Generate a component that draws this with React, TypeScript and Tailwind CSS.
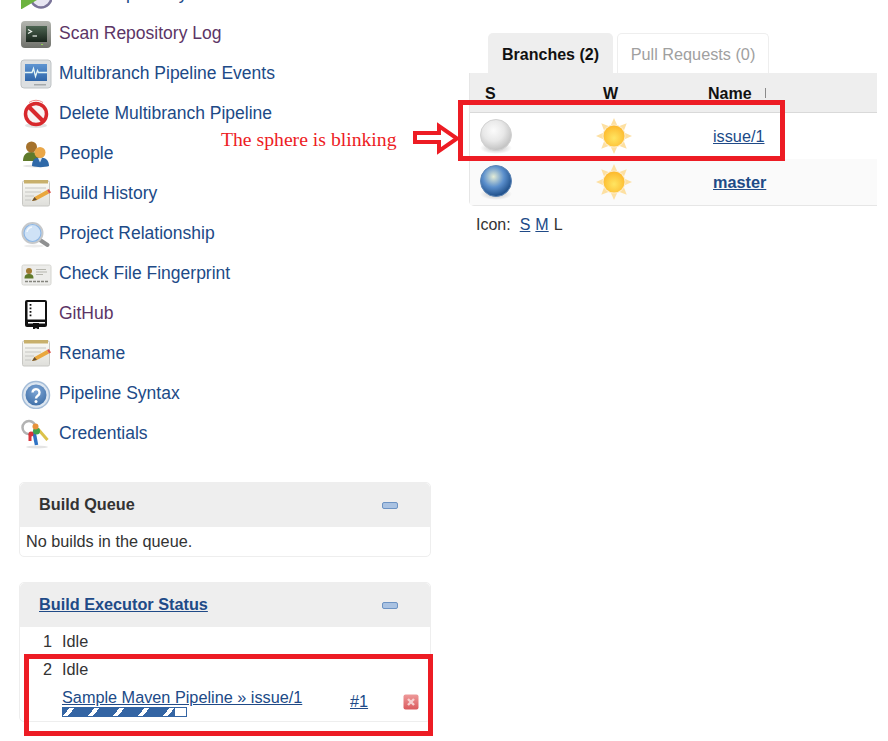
import type { ReactNode } from "react";

const sidebarItems: { label: string; icon: ReactNode; visited?: boolean }[] = [
  { label: "Scan Repository Now", icon: <ScanIcon /> },
  { label: "Scan Repository Log", icon: <TerminalIcon />, visited: true },
  { label: "Multibranch Pipeline Events", icon: <MonitorIcon /> },
  { label: "Delete Multibranch Pipeline", icon: <NoEntryIcon /> },
  { label: "People", icon: <PeopleIcon /> },
  { label: "Build History", icon: <NotepadIcon id="a" /> },
  { label: "Project Relationship", icon: <SearchIcon /> },
  { label: "Check File Fingerprint", icon: <CardIcon /> },
  { label: "GitHub", icon: <BookIcon />, visited: true },
  { label: "Rename", icon: <NotepadIcon id="b" /> },
  { label: "Pipeline Syntax", icon: <HelpIcon /> },
  { label: "Credentials", icon: <KeysIcon /> },
];

function ScanIcon() {
  return (
    <svg width="32" height="32" viewBox="0 0 32 32">
      <circle cx="21" cy="20" r="10.500" fill="#e8e6f2" stroke="#7a7499" strokeWidth="2.500" />
      <path d="M1 32.500L1 20L22 20Z" fill="#6cb33f" />
    </svg>
  );
}

function TerminalIcon() {
  return (
    <svg width="32" height="32" viewBox="0 0 32 32">
      <linearGradient id="term-bezel" x1="0" y1="0" x2="0" y2="1">
        <stop offset="0" stopColor="#b4b6b0" />
        <stop offset="1" stopColor="#6f716b" />
      </linearGradient>
      <linearGradient id="term-screen" x1="0" y1="0" x2="0" y2="1">
        <stop offset="0" stopColor="#4d6552" />
        <stop offset="1" stopColor="#18241b" />
      </linearGradient>
      <rect x="1" y="4" width="30" height="27" rx="4" fill="url(#term-bezel)" />
      <rect x="6" y="9" width="21" height="16" fill="url(#term-screen)" />
      <path d="M8 12.500l3.500 2-3.500 2" fill="none" stroke="#eef4ee" strokeWidth="1.200" />
      <path d="M12.500 19h4.500" stroke="#eef4ee" strokeWidth="1.200" />
      <rect x="21" y="27" width="2" height="1" fill="#8fd14f" />
    </svg>
  );
}

function MonitorIcon() {
  return (
    <svg width="32" height="32" viewBox="0 0 32 32">
      <linearGradient id="mon-screen" x1="0" y1="0" x2="0" y2="1">
        <stop offset="0" stopColor="#5f95d2" />
        <stop offset="1" stopColor="#2f66a9" />
      </linearGradient>
      <rect x="1" y="3" width="30" height="28" rx="3" fill="#dcdfe1" stroke="#bfc3c5" />
      <rect x="5" y="7" width="22" height="17" fill="url(#mon-screen)" />
      <path d="M5 15.500h7l1.500-4 2 8 2-6 1 2h8.500" fill="none" stroke="#e4f5f5" strokeWidth="1.300" />
      <rect x="14" y="27" width="12" height="1.500" fill="#a5a9ab" />
    </svg>
  );
}

function NoEntryIcon() {
  return (
    <svg width="32" height="32" viewBox="0 0 32 32">
      <ellipse cx="16" cy="28.500" rx="11" ry="2.500" fill="#e2e2e2" />
      <circle cx="16" cy="17" r="10.500" fill="#f8f3f3" stroke="#d8282c" strokeWidth="3.500" />
      <path d="M9.500 10.500l13 13" stroke="#d8282c" strokeWidth="4" />
      <path d="M9 5.500a12 12 0 0 1 14 0" fill="none" stroke="#ef8a8a" strokeWidth="1" />
    </svg>
  );
}

function PeopleIcon() {
  return (
    <svg width="32" height="32" viewBox="0 0 32 32">
      <ellipse cx="16" cy="29" rx="13" ry="1.500" fill="#e4e4e4" />
      <path d="M3 24c0-6 3-9 8.500-9s8.500 3 8.500 9z" fill="#5f7a2b" />
      <circle cx="11.500" cy="10" r="5.500" fill="#a5722c" />
      <path d="M12 29c0-6 2.500-8.500 8-8.500s9 2.500 9 8.500c-5 1.500-12 1.500-17 0z" fill="#2f69a8" />
      <circle cx="20" cy="15.500" r="5.500" fill="#eaa748" />
      <path d="M18 21l2 4.500 2-4.500z" fill="#dce8f3" />
    </svg>
  );
}

function NotepadIcon({ id }: { id: string }) {
  return (
    <svg width="32" height="32" viewBox="0 0 32 32">
      <linearGradient id={`pad-${id}`} x1="0" y1="0" x2="0" y2="1">
        <stop offset="0" stopColor="#fbfbf6" />
        <stop offset="1" stopColor="#dededa" />
      </linearGradient>
      <rect x="2.500" y="4" width="27" height="25" rx="1.500" fill={`url(#pad-${id})`} stroke="#c8c8c4" />
      <rect x="4" y="3" width="24" height="3.500" fill="#c8b06c" />
      <path d="M5 11h21M5 15h16M5 19h9M5 23h6" stroke="#c6c6c2" />
      <path d="M12 24l2.500-4L27 13l2 3.500-12 6.500z" fill="#e9a73d" />
      <path d="M27 13l2 3.500 2-1-2-3.500z" fill="#d8534a" />
      <path d="M12 24l2.500-4 2.500 3z" fill="#6a5233" />
    </svg>
  );
}

function SearchIcon() {
  return (
    <svg width="32" height="32" viewBox="0 0 32 32">
      <ellipse cx="14" cy="29" rx="10" ry="1.500" fill="#ececec" />
      <path d="M20 23l7.500 5" stroke="#8f9091" strokeWidth="4" strokeLinecap="round" />
      <circle cx="12.500" cy="16" r="10" fill="#cfe2f6" stroke="#c6c8ca" strokeWidth="2" />
      <circle cx="12.500" cy="16" r="8.500" fill="none" stroke="#8db6e4" strokeWidth="1.200" />
      <path d="M7 15a6 6 0 0 1 5-5" fill="none" stroke="#f2f8fd" strokeWidth="1.500" />
    </svg>
  );
}

function CardIcon() {
  return (
    <svg width="32" height="32" viewBox="0 0 32 32">
      <rect x="2" y="8" width="29" height="20" rx="1.500" fill="#ececea" stroke="#d5d5d0" />
      <circle cx="9" cy="14" r="3" fill="#a07a32" />
      <path d="M4.500 21.500c0-3.500 1.500-4.500 4.500-4.500s4.500 1 4.500 4.500z" fill="#5f7a2b" />
      <path d="M16 12.500h10M16 15h11M16 17.500h7" stroke="#b5b5ad" />
      <path d="M5 24.500h23" stroke="#85857e" strokeWidth="1.500" strokeDasharray="3 1" />
    </svg>
  );
}

function BookIcon() {
  return (
    <svg width="32" height="32" viewBox="0 0 32 32">
      <rect x="5" y="3" width="22" height="27" rx="2" fill="#111111" />
      <rect x="7.500" y="5" width="17.500" height="17.500" fill="#ffffff" />
      <rect x="8" y="25" width="17" height="1.500" fill="#ffffff" />
      <path d="M13 26h6v7l-3-2-3 2z" fill="#111111" />
      <path d="M10.500 7v14" stroke="#111111" strokeWidth="1.800" strokeDasharray="1.800 1.700" />
    </svg>
  );
}

function HelpIcon() {
  return (
    <svg width="32" height="32" viewBox="0 0 32 32">
      <radialGradient id="help" cx="0.5" cy="0.3" r="0.75">
        <stop offset="0" stopColor="#7ea6d6" />
        <stop offset="1" stopColor="#3e6ea6" />
      </radialGradient>
      <circle cx="16" cy="18" r="13.500" fill="#dde6f0" stroke="#a5bdd8" strokeWidth="1.500" />
      <circle cx="16" cy="18" r="10.500" fill="url(#help)" />
      <path d="M12.500 15.500a3.500 3.500 0 1 1 5.500 3c-1.400 1-2 1.500-2 3" fill="none" stroke="#ffffff" strokeWidth="2.400" />
      <circle cx="16" cy="24.500" r="1.500" fill="#ffffff" />
    </svg>
  );
}

function KeysIcon() {
  return (
    <svg width="32" height="32" viewBox="0 0 32 32">
      <ellipse cx="17" cy="30" rx="11" ry="1.500" fill="#e4e4e4" />
      <circle cx="9" cy="10.500" r="6.500" fill="none" stroke="#b3b3b3" strokeWidth="2.500" />
      <path d="M18 12l9.500 11" stroke="#dcc24a" strokeWidth="3" />
      <path d="M14 15l2.500 13" stroke="#2f73c4" strokeWidth="3.500" />
      <path d="M10 17v7" stroke="#d8343a" strokeWidth="3" />
      <circle cx="16.500" cy="14" r="3.500" fill="#3fa34d" />
      <circle cx="15.500" cy="9.500" r="3" fill="#e8923a" />
      <circle cx="11" cy="17" r="2.500" fill="#d8343a" />
    </svg>
  );
}

function Sphere({ id, light, mid, dark, edge }: { id: string; light: string; mid: string; dark: string; edge: string }) {
  return (
    <svg width="36" height="40" viewBox="0 0 36 40">
      <radialGradient id={`ball-${id}`} cx="0.42" cy="0.36" r="0.62">
        <stop offset="0" stopColor={light} />
        <stop offset="0.55" stopColor={mid} />
        <stop offset="1" stopColor={dark} />
      </radialGradient>
      <radialGradient id={`shade-${id}`} cx="0.5" cy="0.5" r="0.5">
        <stop offset="0" stopColor="#bdbdbd" />
        <stop offset="1" stopColor="#bdbdbd" stopOpacity="0" />
      </radialGradient>
      <ellipse cx="18" cy="32" rx="16" ry="6" fill={`url(#shade-${id})`} />
      <circle cx="18" cy="19" r="15.500" fill={`url(#ball-${id})`} stroke={edge} />
    </svg>
  );
}

function Sun({ id }: { id: string }) {
  const rays = [0, 45, 90, 135, 180, 225, 270, 315];
  return (
    <svg width="38" height="38" viewBox="0 0 38 38">
      <radialGradient id={`sun-${id}`} cx="0.5" cy="0.6" r="0.6">
        <stop offset="0" stopColor="#ffe561" />
        <stop offset="1" stopColor="#fdb82c" />
      </radialGradient>
      {rays.map((r) => (
        <path key={r} d="M15 10L19 1l4 9z" fill="#fde0a2" transform={`rotate(${r} 19 19)`} />
      ))}
      <circle cx="19" cy="19" r="11.500" fill="#fdeccb" />
      <circle cx="19" cy="19" r="10.500" fill={`url(#sun-${id})`} />
    </svg>
  );
}

function StopIcon() {
  return (
    <svg width="16" height="16" viewBox="0 0 16 16">
      <linearGradient id="stop-bg" x1="0" y1="0" x2="0" y2="1">
        <stop offset="0" stopColor="#ee9a9a" />
        <stop offset="1" stopColor="#da5a5d" />
      </linearGradient>
      <rect x="0.500" y="0.500" width="15" height="15" rx="2" fill="url(#stop-bg)" />
      <path d="M5 5l6 6M11 5l-6 6" stroke="#f6d2d2" strokeWidth="2.400" />
    </svg>
  );
}

function MinusButton() {
  return <span className="h-[7px] w-[16px] rounded-[2px] border border-[#6d93c3] bg-[#a9c2e2]" />;
}

function Panel({ title, children }: { title: ReactNode; children: ReactNode }) {
  return (
    <section className="rounded-[5px] border border-[#eeeeee] bg-white">
      <div className="flex h-[44px] items-center justify-between rounded-t-[5px] bg-[#eeeeee] pl-[19px] pr-[32px]">
        <h2 className="pb-[2px] font-bold text-[#333333]">{title}</h2>
        <MinusButton />
      </div>
      {children}
    </section>
  );
}

export default function App() {
  return (
    <div className="relative h-[741px] w-[888px] overflow-hidden bg-white font-['Liberation_Sans',Arial,sans-serif] text-[16.25px] text-[#333333]">
      <div className="flex items-start">
        {/* Left column */}
        <div className="ml-[19px] w-[412px] shrink-0">
          <nav className="-mt-[27px]">
            {sidebarItems.map((item) => (
              <div key={item.label} className="flex h-[40px] items-center">
                <span className="ml-[1px] flex h-[32px] w-[32px] shrink-0 items-center justify-center blur-[0.3px]">
                  {item.icon}
                </span>
                <a
                  className={`ml-[7px] mt-[2px] text-[17.5px] leading-none ${
                    item.visited ? "text-[#5c3566]" : "text-[#204a87]"
                  }`}
                >
                  {item.label}
                </a>
              </div>
            ))}
          </nav>

          <div className="mt-[29px]">
            <Panel title="Build Queue">
              <p className="h-[29px] pl-[6px] pt-[5px] leading-[18px]">No builds in the queue.</p>
            </Panel>
          </div>

          <div className="mt-[25px]">
            <Panel title={<a className="text-[#204a87] underline">Build Executor Status</a>}>
              <div className="flex h-[28px] items-center">
                <span className="w-[32px] text-right">1</span>
                <span className="ml-[10px]">Idle</span>
              </div>
              <div className="flex h-[28px] items-center">
                <span className="w-[32px] text-right">2</span>
                <span className="ml-[10px]">Idle</span>
              </div>
              <div className="flex h-[38px] items-start pl-[42px] pt-[4px]">
                <div className="w-[240px]">
                  <a className="block leading-[20px] whitespace-nowrap text-[#204a87] underline">
                    Sample Maven Pipeline » issue/1
                  </a>
                  <div className="h-[10px] w-[125px] border border-[#3465a4]">
                    <div className="h-full w-[112px] bg-[repeating-linear-gradient(-52deg,#3465a4_0,#3465a4_5.5px,#ffffff_5.5px,#ffffff_9.4px,#3465a4_9.4px,#3465a4_19.7px)]" />
                  </div>
                </div>
                <a className="ml-[48px] mt-[2px] text-[#204a87] underline">#1</a>
                <span className="ml-[35px] mt-[7px] blur-[0.4px]">
                  <StopIcon />
                </span>
              </div>
            </Panel>
          </div>
        </div>

        {/* Right column */}
        <div className="ml-[38px] mt-[33px] w-[408px] shrink-0">
          <div className="ml-[19px] flex h-[40px] items-stretch gap-[4px]">
            <div className="flex w-[125px] items-center justify-center rounded-t-[5px] bg-[#eeeeee] pt-[3px] text-[16px] font-bold text-[#111111]">
              Branches (2)
            </div>
            <div className="flex w-[152px] items-center justify-center rounded-t-[5px] border border-b-0 border-[#eeeeee] pt-[2px] text-[#a0a0a0]">
              Pull Requests (0)
            </div>
          </div>

          <div className="rounded-bl-[5px] border-b border-l border-[#e6e6e6]">
            <div className="flex h-[40px] items-end border-b border-[#d9d9d9] bg-[#eeeeee] pb-[10px] text-[16px] font-bold leading-none text-[#111111]">
              <span className="ml-[15px] w-[118px]">S</span>
              <span className="w-[105px]">W</span>
              <span>Name</span>
              <span className="mb-[4px] ml-[13px] h-[10px] w-[1px] bg-[#8a8a8a]" />
            </div>
            <div className="flex h-[46px] items-center">
              <span className="ml-[8px] w-[113px]">
                <Sphere id="grey" light="#fbfbfb" mid="#e8e8e8" dark="#c4c4c4" edge="#d2d2d2" />
              </span>
              <span className="w-[111px] pl-[4px]">
                <Sun id="one" />
              </span>
              <a className="ml-[11px] text-[#204a87] underline">issue/1</a>
            </div>
            <div className="flex h-[46px] items-center bg-[#fafafa]">
              <span className="ml-[8px] w-[113px]">
                <Sphere id="blue" light="#e4ecd6" mid="#5b8fcc" dark="#22528c" edge="#5d85b5" />
              </span>
              <span className="w-[111px] pl-[4px]">
                <Sun id="two" />
              </span>
              <a className="ml-[11px] font-bold text-[#204a87] underline">master</a>
            </div>
          </div>

          <div className="ml-[7px] mt-[9px] flex text-[16px] leading-[20px]">
            <span>Icon:</span>
            <a className="ml-[9px] text-[#204a87] underline">S</a>
            <a className="ml-[5px] text-[#204a87] underline">M</a>
            <span className="ml-[5px]">L</span>
          </div>
        </div>
      </div>

      {/* Red annotations pasted over the page */}
      <div className="absolute left-[458px] top-[100px] h-[61px] w-[327px] border-[5px] border-[#ed1c24]" />
      <div className="absolute left-[24px] top-[654px] h-[82px] w-[409px] border-[5px] border-[#ed1c24]" />
      <span className="absolute left-[221px] top-[128px] font-['Liberation_Serif',serif] text-[19.7px] leading-[22px] whitespace-nowrap text-[#ed1c24]">
        The sphere is blinking
      </span>
      <svg className="absolute left-[412px] top-[120px]" width="50" height="38" viewBox="0 0 50 38">
        <path d="M3 13h24V6l18 12.500L27 31v-9H3z" fill="#ffffff" stroke="#ed1c24" strokeWidth="4" />
      </svg>
    </div>
  );
}
